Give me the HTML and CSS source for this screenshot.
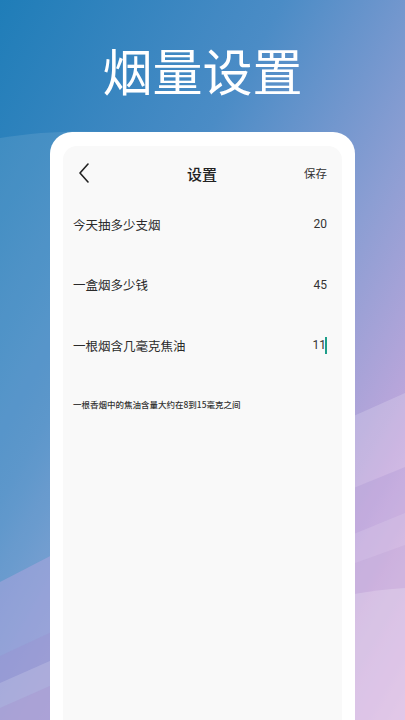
FILE: index.html
```html
<!DOCTYPE html>
<html lang="zh-CN">
<head>
<meta charset="utf-8">
<title>烟量设置</title>
<link rel="stylesheet" href="styles.css">
</head>
<body>
<div class="screen">
  <svg class="bg" width="405" height="720" viewBox="0 0 405 720" xmlns="http://www.w3.org/2000/svg">
    <defs>
      <linearGradient id="g" x1="0" y1="0" x2="1" y2="1" gradientUnits="objectBoundingBox">
        <stop offset="0" stop-color="#1f7db8"/>
        <stop offset="0.35" stop-color="#4b8cc6"/>
        <stop offset="0.6" stop-color="#8c9ed3"/>
        <stop offset="0.8" stop-color="#c1a7dc"/>
        <stop offset="1" stop-color="#f2bfe8"/>
      </linearGradient>
    </defs>
    <rect width="405" height="720" fill="url(#g)"/>
    <path d="M0 138 C 60 128, 120 130, 200 140 L 200 720 L 0 720 Z" fill="#ffffff" fill-opacity="0.1"/>
    <path d="M0 582 L 120 520 L 120 720 L 0 720 Z" fill="#b7a6e0" fill-opacity="0.45"/>
    <path d="M0 656 L 120 600 L 120 720 L 0 720 Z" fill="#9a88cc" fill-opacity="0.25"/>
    <path d="M0 683 L 120 630 L 120 720 L 0 720 Z" fill="#ffffff" fill-opacity="0.16"/>
    <path d="M0 708 L 120 655 L 120 720 L 0 720 Z" fill="#a585c8" fill-opacity="0.25"/>
    <path d="M300 440 L 405 393 L 405 720 L 300 720 Z" fill="#ffffff" fill-opacity="0.18"/>
    <path d="M300 510 L 405 467 L 405 720 L 300 720 Z" fill="#9b86cc" fill-opacity="0.22"/>
    <path d="M300 556 L 405 513 L 405 720 L 300 720 Z" fill="#ffffff" fill-opacity="0.12"/>
    <path d="M300 583 L 405 545 L 405 720 L 300 720 Z" fill="#a985c9" fill-opacity="0.14"/>
    <path d="M300 606 C 340 596, 370 590, 405 588 L 405 720 L 300 720 Z" fill="#ffffff" fill-opacity="0.2"/>
  </svg>

  <h1 class="title">烟量设置</h1>

  <div class="card">
    <div class="panel">
      <div class="header">
        <svg class="back" width="12" height="20" viewBox="0 0 12 20" xmlns="http://www.w3.org/2000/svg">
          <polyline points="10,1 2,10 10,19" fill="none" stroke="#222" stroke-width="1.6" stroke-linecap="round" stroke-linejoin="round"/>
        </svg>
        <div class="header-title">设置</div>
        <div class="save">保存</div>
      </div>

      <div class="rows">
        <div class="row">
          <span class="label">今天抽多少支烟</span>
          <span class="value">20</span>
        </div>
        <div class="row">
          <span class="label">一盒烟多少钱</span>
          <span class="value">45</span>
        </div>
        <div class="row">
          <span class="label">一根烟含几毫克焦油</span>
          <span class="value">11<span class="cursor"></span></span>
        </div>
      </div>

      <p class="note">一根香烟中的焦油含量大约在8到15毫克之间</p>
    </div>
  </div>
</div>
</body>
</html>
```

FILE: styles.css
```css
* {
  box-sizing: border-box;
}

html, body {
  margin: 0;
  padding: 0;
}

body {
  font-family: "Noto Sans CJK SC", "Noto Sans", Roboto, sans-serif;
  color: #222;
}

.screen {
  position: relative;
  width: 405px;
  height: 720px;
  overflow: hidden;
  display: flex;
  flex-direction: column;
  align-items: center;
}

.bg {
  position: absolute;
  left: 0;
  top: 0;
  z-index: 0;
}

.title {
  position: relative;
  z-index: 1;
  margin: 39px 0 0;
  height: 60px;
  font-size: 50px;
  line-height: 60px;
  font-weight: 400;
  color: #ffffff;
}

.card {
  position: relative;
  z-index: 1;
  margin-top: 33px;
  width: 305px;
  flex: 1;
  background: #ffffff;
  border-radius: 22px 22px 0 0;
  padding: 14px 13px 0;
  display: flex;
}

.panel {
  flex: 1;
  background: #f9f9f9;
  border-radius: 14px 14px 0 0;
  padding: 0 15px 0 10px;
  display: flex;
  flex-direction: column;
}

.header {
  height: 54px;
  display: grid;
  grid-template-columns: 1fr auto 1fr;
  align-items: center;
}

.back {
  margin-left: 5px;
  display: block;
}

.header-title {
  font-size: 15px;
  font-weight: 500;
  color: #222;
  padding-left: 4px;
}

.save {
  justify-self: end;
  font-size: 11.5px;
  color: #333;
}

.rows {
  display: flex;
  flex-direction: column;
  gap: 12.5px;
}

.row {
  height: 48px;
  display: flex;
  align-items: center;
  justify-content: space-between;
}

.label {
  font-size: 12.5px;
  color: #2a2a2a;
}

.value {
  font-family: Roboto, "Noto Sans", sans-serif;
  font-size: 12px;
  color: #333;
  display: flex;
  align-items: center;
}

.cursor {
  display: inline-block;
  width: 2px;
  height: 17px;
  background: #1e9e8a;
  margin-left: -1px;
}

.note {
  margin: 29px 0 0;
  font-size: 8.5px;
  line-height: 12px;
  color: #333;
  font-weight: 500;
}
```
